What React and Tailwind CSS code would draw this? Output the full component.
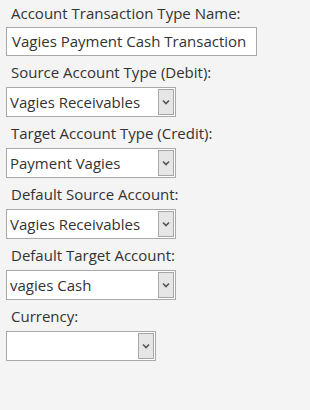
export default function App() {
  const fields = [
    { label: "Source Account Type (Debit):", value: "Vagies Receivables", w: "w-[170px]" },
    { label: "Target Account Type (Credit):", value: "Payment Vagies", w: "w-[170px]" },
    { label: "Default Source Account:", value: "Vagies Receivables", w: "w-[170px]" },
    { label: "Default Target Account:", value: "vagies Cash", w: "w-[170px]" },
    { label: "Currency:", value: "", w: "w-[150px]" },
  ];

  return (
    <div className="w-[310px] h-[410px] bg-[#f4f4f4] text-[#333] text-[15px] font-['Open_Sans',sans-serif] px-[6px]">
      <div className="h-[27px] pl-[5px] pt-[3px] leading-[20px]">Account Transaction Type Name:</div>
      <div className="w-[251px] h-[29px] bg-white border border-[#a9a9a9] pl-[5px] leading-[27px] whitespace-nowrap overflow-hidden">
        Vagies Payment Cash Transaction
      </div>

      {fields.map((f) => (
        <div key={f.label}>
          <div className="h-[31px] pl-[5px] pt-[6px] leading-[20px]">{f.label}</div>
          <div className={`${f.w} h-[30px] bg-white border border-[#a9a9a9] flex items-stretch`}>
            <div className="flex-1 pl-[3px] leading-[29px] whitespace-nowrap overflow-hidden">{f.value}</div>
            <div className="w-[16px] my-[1px] mr-[1px] bg-[#e6e6e6] border border-[#a6a6a6] flex items-center justify-center">
              <svg width="8" height="6" viewBox="0 0 8 6">
                <path d="M1 1.5 L4 4.5 L7 1.5" fill="none" stroke="#555" strokeWidth="1.6" />
              </svg>
            </div>
          </div>
        </div>
      ))}
    </div>
  );
}
